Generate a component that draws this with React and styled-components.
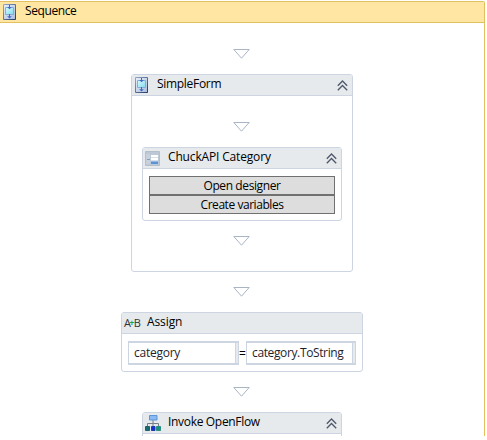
import React from "react";
import styled, { createGlobalStyle } from "styled-components";

const Global = createGlobalStyle`
  *, *::before, *::after { box-sizing: border-box; }
  body { margin: 0; background: #fff; }
`;

const Canvas = styled.main`
  width: 485px;
  height: 436px;
  padding-top: 1px;
  overflow: hidden;
  font-family: "Open Sans", "Noto Sans", sans-serif;
  font-size: 12px;
  color: #000;
`;

const SequenceFrame = styled.section`
  height: 460px;
  border: 1px solid #e2c060;
  border-left: 0;
  border-radius: 0 2px 0 0;
`;

const SequenceHeader = styled.header`
  display: flex;
  align-items: center;
  height: 21px;
  padding-left: 3px;
  background: #ffe6a2;
  border-bottom: 1px solid #e2c060;
`;

const Flow = styled.div`
  display: flex;
  flex-direction: column;
  align-items: center;
`;

const Card = styled.section`
  flex: none;
  width: ${(p) => p.$width}px;
  height: ${(p) => p.$height}px;
  border: 1px solid #cdd4e2;
  border-radius: 3px;
  background: #fff;
`;

const CardHeader = styled.header`
  display: flex;
  align-items: center;
  height: 21px;
  padding: 0 4px 0 ${(p) => p.$inset}px;
  background: #e6eaed;
  border-bottom: 1px solid #cdd4e2;
  border-radius: 2px 2px 0 0;
`;

const IconSlot = styled.span`
  flex: none;
  display: flex;
  width: ${(p) => p.$width}px;
`;

const Title = styled.span`
  margin-top: -2px;
  line-height: 16px;
  white-space: nowrap;
  letter-spacing: ${(p) => p.$tracking || 0}px;
`;

const ToggleButton = styled.button`
  display: flex;
  margin: 0 0 0 auto;
  padding: 0;
  border: 0;
  background: none;
`;

const Arrow = styled.svg`
  flex: none;
  display: block;
  margin: ${(p) => p.$before}px 1px ${(p) => p.$after}px 0;
`;

const ButtonStack = styled.div`
  display: flex;
  flex-direction: column;
  padding: 7px 6px;
`;

const ActionButton = styled.button`
  height: ${(p) => p.$height}px;
  padding: 1px 0 0;
  border: 1px solid #707070;
  background: #ddd;
  font: inherit;
  line-height: 16px;
  letter-spacing: ${(p) => p.$tracking}px;
  color: #000;
`;

const AssignRow = styled.div`
  display: flex;
  align-items: center;
  padding: 7px 6px;
`;

const Expression = styled.div`
  width: ${(p) => p.$width}px;
  height: 24px;
  padding: 1px 0 0 5px;
  border: 1px solid #cdd4e2;
  border-width: 2px 1px;
  box-shadow: inset -2px 0 #e6eaed, inset -3px 0 #cdd4e2;
  line-height: 17px;
  white-space: nowrap;
  letter-spacing: ${(p) => p.$tracking}px;
  color: #1e1e2d;
`;

const Equals = styled.span`
  width: 7px;
  text-align: center;
`;

const LetterMark = styled.span`
  font-size: 11px;
  line-height: 14px;
  letter-spacing: -0.6px;
  color: #333;
`;

const PlusMark = styled.span`
  display: inline-block;
  width: 4px;
  font-size: 9px;
  font-weight: 700;
  line-height: 10px;
  vertical-align: 1px;
  margin: 0 0.5px 0 -1px;
  color: #23a447;
`;

function DownArrow({ before, after }) {
  return (
    <Arrow width="17" height="10" viewBox="0 0 17 10" $before={before} $after={after}>
      <path d="M.8.5H16.2L8.5 9.2Z" fill="#fff" stroke="#a9b4c5" />
    </Arrow>
  );
}

function Chevron() {
  return (
    <ToggleButton aria-label="Collapse">
      <svg width="11" height="11" viewBox="0 0 11 11" fill="none" stroke="#50596b" strokeWidth="1.35">
        <path d="M.8 5.7 5.5 1 10.2 5.7M.8 10.2 5.5 5.5 10.2 10.2" />
      </svg>
    </ToggleButton>
  );
}

function SequenceIcon() {
  return (
    <svg width="13" height="16" viewBox="0 0 13 16">
      <defs>
        <linearGradient id="seqEdge" x2="1" y2="1">
          <stop stopColor="#93a8c8" />
          <stop offset="1" stopColor="#263a66" />
        </linearGradient>
        <linearGradient id="seqPanel" x2="1" y2="1">
          <stop stopColor="#e9f0fa" />
          <stop offset="1" stopColor="#a9bcdb" />
        </linearGradient>
        <linearGradient id="seqCell" x2="1" y2="1">
          <stop stopColor="#dcfbfd" />
          <stop offset="1" stopColor="#7edced" />
        </linearGradient>
      </defs>
      <path d="M.5.5H12.5V15.5H.5Z" fill="url(#seqPanel)" stroke="url(#seqEdge)" />
      <path d="M2.5 3.5H10.5V10.5H2.5Z" fill="url(#seqCell)" stroke="#86add3" />
      <path d="M6.5 1V4M6.5 10V14" stroke="#4167b5" />
      <path d="M4.2 3H8.8L6.5 5.3ZM4.2 12.2H8.8L6.5 14.6Z" fill="#4169c5" />
    </svg>
  );
}

function FormIcon() {
  return (
    <svg width="15" height="15" viewBox="0 0 15 15">
      <path d="M.5.5H14.5V14.5H.5Z" fill="#bcc8d6" stroke="#b3bfcd" />
      <path d="M1 3H5V13H1Z" fill="#c8d1dc" />
      <path d="M2 8.5H5" stroke="#879fba" />
      <path d="M6 4H13V13H6Z" fill="#fff" />
      <path d="M6 6.5H13M6 9.5H13" stroke="#d5e0ec" />
      <path d="M6 10H13V13H6Z" fill="#5b94d6" />
      <path d="M6 10.5H13" stroke="#91b9e7" />
    </svg>
  );
}

function NetworkIcon() {
  return (
    <svg width="16" height="16" viewBox="0 0 16 16">
      <path d="M8 5V11M2.5 11V8.5H13.5V11" fill="none" stroke="#777f87" />
      <path d="M4.5.5H12V5H4.5Z" fill="#8bb9f4" stroke="#5f94d6" />
      <path d="M.5 11.5H4.5V15.5H.5Z" fill="#146b70" stroke="#245f68" />
      <path d="M6.5 11.5H10V15.5H6.5Z" fill="#1430d2" stroke="#253aa9" />
      <path d="M11.5 11.5H15.5V15.5H11.5Z" fill="#139483" stroke="#2c8c80" />
    </svg>
  );
}

function AssignIcon() {
  return <LetterMark>A<PlusMark>+</PlusMark>B</LetterMark>;
}

function Activity({ icon, title, tracking, width, height, inset, slot, collapsible = true, children }) {
  return (
    <Card $width={width} $height={height}>
      <CardHeader $inset={inset}>
        <IconSlot $width={slot}>{icon}</IconSlot>
        <Title $tracking={tracking}>{title}</Title>
        {collapsible && <Chevron />}
      </CardHeader>
      {children}
    </Card>
  );
}

export default function App() {
  return (
    <>
      <Global />
      <Canvas>
        <SequenceFrame>
          <SequenceHeader>
            <IconSlot $width={22}><SequenceIcon /></IconSlot>
            <Title $tracking={-0.4}>Sequence</Title>
          </SequenceHeader>
          <Flow>
            <DownArrow before={26} after={15} />
            <Activity icon={<SequenceIcon />} title="SimpleForm" tracking={-0.3} width={222} height={198} inset={3} slot={22}>
              <Flow>
                <DownArrow before={26} after={15} />
                <Activity icon={<FormIcon />} title="ChuckAPI Category" tracking={-0.16} width={200} height={74} inset={2} slot={23}>
                  <ButtonStack>
                    <ActionButton $height={19} $tracking={-0.4}>Open designer</ActionButton>
                    <ActionButton $height={19} $tracking={-0.45}>Create variables</ActionButton>
                  </ButtonStack>
                </Activity>
                <DownArrow before={15} after={0} />
              </Flow>
            </Activity>
            <DownArrow before={15} after={15} />
            <Activity icon={<AssignIcon />} title="Assign" tracking={-0.1} width={242} height={60} inset={2} slot={23} collapsible={false}>
              <AssignRow>
                <Expression $width={111} $tracking={-0.25}>category</Expression>
                <Equals>=</Equals>
                <Expression $width={110} $tracking={-0.37}>category.ToString</Expression>
              </AssignRow>
            </Activity>
            <DownArrow before={15} after={15} />
            <Activity icon={<NetworkIcon />} title="Invoke OpenFlow" tracking={-0.32} width={200} height={60} inset={2} slot={23} />
          </Flow>
        </SequenceFrame>
      </Canvas>
    </>
  );
}
